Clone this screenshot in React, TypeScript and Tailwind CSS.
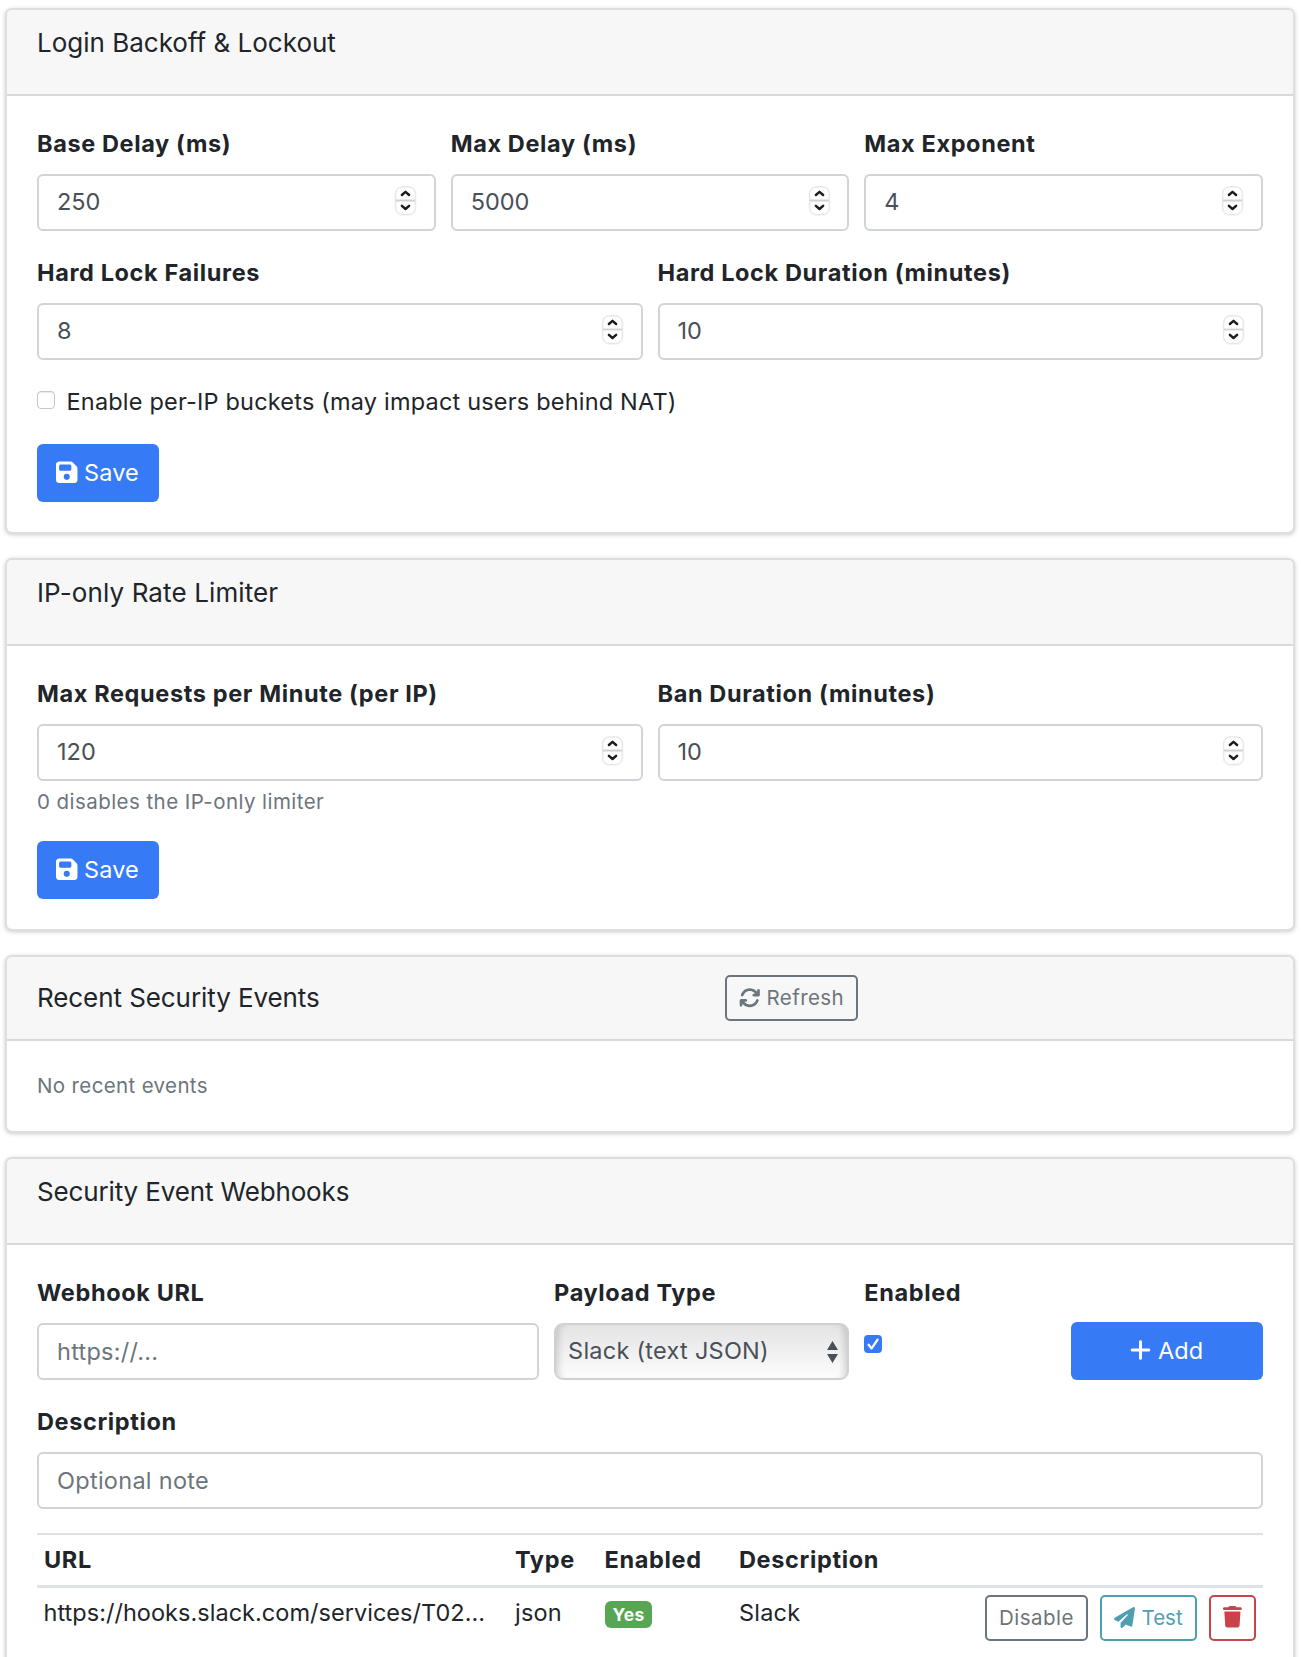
import React from "react";
import { FaFloppyDisk, FaArrowsRotate, FaPaperPlane, FaPlus, FaTrash } from "react-icons/fa6";

const control =
  "h-[57px] w-full rounded-[6px] border-2 border-[#d0d3d7] bg-white pl-[18px] text-[23.5px] leading-9 text-[#495057] placeholder:text-[#6c757d] placeholder:opacity-100 outline-none";

function Stepper() {
  return (
    <svg
      className="pointer-events-none absolute top-[11px] right-[18.5px] h-[31px] w-[23px]"
      viewBox="0 0 23 31"
      fill="none"
    >
      <rect x="1" y="1.5" width="21" height="29" rx="7" stroke="#000" strokeOpacity="0.04" />
      <rect x="1.8" y="2" width="19.4" height="27.4" rx="6.5" fill="#fff" stroke="#dedede" strokeWidth="0.9" />
      <path d="M2 15.5h19" stroke="#d2d2d2" strokeWidth="1.8" />
      <path d="M7.9 10 11.5 6.9l3.6 3.1M7.9 20.9l3.6 3.1 3.6-3.1" stroke="#1d1d1f" strokeWidth="2.5" strokeLinecap="round" strokeLinejoin="round" />
    </svg>
  );
}

function Label({ children }: { children: React.ReactNode }) {
  return (
    <div className="mb-3 h-9 text-[23.5px] leading-9 font-bold tracking-[0.62px] whitespace-nowrap">{children}</div>
  );
}

function NumberField({ label, value }: { label: string; value: string }) {
  return (
    <div>
      <Label>{label}</Label>
      <div className="relative">
        <input className={control + " pb-[2px]"} defaultValue={value} aria-label={label} />
        <Stepper />
      </div>
    </div>
  );
}

function Card({ children }: { children: React.ReactNode }) {
  return (
    <section className="overflow-hidden rounded-[7px] border-2 border-[#dedede] bg-white shadow-[0_1px_4px_rgba(0,0,0,0.2)]">
      {children}
    </section>
  );
}

function CardHeader({ children }: { children: React.ReactNode }) {
  return (
    <header className="h-[86px] border-b-2 border-[#d9d9d9] bg-[#f7f7f7] px-[30px] pt-[17px]">
      <h5 className="text-[26px] leading-[31px]">{children}</h5>
    </header>
  );
}

function SaveButton() {
  return (
    <button className="flex h-[58px] w-[122px] items-center rounded-[6px] bg-[#377af6] pl-[19px] text-[23.5px] text-white tracking-[0.1px]">
      <FaFloppyDisk className="mb-[2px] h-[24.5px] w-[21.5px]" />
      <span className="ml-[6.5px] pb-px">Save</span>
    </button>
  );
}

export default function App() {
  return (
    <div className="flex h-[1657px] flex-col gap-6 overflow-hidden bg-white pt-2 pr-[6px] pl-[5px] font-[Inter,sans-serif] text-[#212529] [&>*]:shrink-0">
      <Card>
        <CardHeader>Login Backoff &amp; Lockout</CardHeader>
        <div className="flex flex-col gap-6 p-[30px]">
          <div className="grid grid-cols-3 gap-[15px]">
            <NumberField label="Base Delay (ms)" value="250" />
            <NumberField label="Max Delay (ms)" value="5000" />
            <NumberField label="Max Exponent" value="4" />
          </div>
          <div className="grid grid-cols-2 gap-[15px]">
            <NumberField label="Hard Lock Failures" value="8" />
            <NumberField label="Hard Lock Duration (minutes)" value="10" />
          </div>
          <label className="flex h-9 items-start text-[23.5px] leading-9 tracking-[0.19px]">
            <span className="mt-[7px] size-[18px] rounded-[4px] border border-[#c6c6c6] bg-white shadow-[inset_0_1px_1px_rgba(0,0,0,0.08)]" />
            <span className="ml-[11.5px]">Enable per-IP buckets (may impact users behind NAT)</span>
          </label>
          <SaveButton />
        </div>
      </Card>

      <Card>
        <CardHeader>
          <span className="tracking-[0.12px]">IP-only Rate Limiter</span>
        </CardHeader>
        <div className="p-[30px]">
          <div className="grid grid-cols-2 gap-[15px]">
            <NumberField label="Max Requests per Minute (per IP)" value="120" />
            <NumberField label="Ban Duration (minutes)" value="10" />
          </div>
          <p className="mt-[5px] mb-6 text-[20.5px] leading-[31px] tracking-[0.44px] text-[#6c757d]">
            0 disables the IP-only limiter
          </p>
          <SaveButton />
        </div>
      </Card>

      <Card>
        <header className="flex h-[84px] items-center border-b-2 border-[#d9d9d9] bg-[#f7f7f7] pl-[30px]">
          <h5 className="w-[688px] pb-[2px] text-[26px] leading-[31px] tracking-[-0.08px]">Recent Security Events</h5>
          <button className="flex h-[46px] w-[133px] items-center rounded-[5px] border-2 border-[#6c757d] pl-[12px] text-[20.5px] tracking-[0.42px] text-[#6c757d]">
            <FaArrowsRotate className="size-[21.5px]" />
            <span className="ml-[6px]">Refresh</span>
          </button>
        </header>
        <p className="flex h-[90px] items-center px-[30px] text-[20.5px] tracking-[0.36px] text-[#6c757d]">
          No recent events
        </p>
      </Card>

      <Card>
        <CardHeader>
          <span className="tracking-[-0.14px]">Security Event Webhooks</span>
        </CardHeader>
        <div className="h-[500px] p-[30px]">
          <div className="grid grid-cols-12 gap-x-[15px] gap-y-6">
            <div className="col-span-5">
              <Label>Webhook URL</Label>
              <input className={control + " tracking-[0.25px]"} placeholder="https://..." />
            </div>
            <div className="col-span-3">
              <Label>Payload Type</Label>
              <div className="flex h-[57px] items-center justify-between rounded-[9px] border-2 border-[#d0d0d2] bg-linear-to-b from-[#e3e3e5] to-[#fdfdfd] pr-[9px] pl-[12px] text-[23.5px] tracking-[0.26px] text-[#495057] shadow-[inset_8px_0_6px_-5px_rgba(0,0,0,0.14),inset_-8px_0_6px_-5px_rgba(0,0,0,0.14)]">
                <span className="pb-px">Slack (text JSON)</span>
                <svg className="h-[22px] w-[11px]" viewBox="0 0 11 22" fill="#495057">
                  <path d="M5.5 0 11 9H0zM5.5 22 0 13h11z" />
                </svg>
              </div>
            </div>
            <div className="col-span-2">
              <Label>Enabled</Label>
              <div className="mt-6 flex size-[18px] items-center justify-center rounded-[4px] bg-[#377af6]">
                <svg className="size-[18px]" viewBox="0 0 18 18" fill="none">
                  <path d="M4.6 9.8 7.6 13.4 13.6 4.6" stroke="#fff" strokeWidth="2.3" strokeLinecap="round" strokeLinejoin="round" />
                </svg>
              </div>
            </div>
            <div className="col-span-2 pt-[47px]">
              <button className="flex h-[58px] w-full items-center justify-center rounded-[6px] bg-[#377af6] text-[23.5px] tracking-[0.1px] text-white">
                <FaPlus className="mb-[2px] h-[24px] w-[21px]" />
                <span className="mr-px ml-[7px]">Add</span>
              </button>
            </div>
            <div className="col-span-12">
              <Label>Description</Label>
              <input className={control + " tracking-[0.28px]"} placeholder="Optional note" />
            </div>
          </div>

          <table className="mt-6 w-full table-fixed border-collapse text-left text-[23.5px] leading-9 whitespace-nowrap">
            <colgroup>
              <col className="w-[471px]" />
              <col className="w-[89.5px]" />
              <col className="w-[134.5px]" />
              <col className="w-[246px]" />
              <col />
            </colgroup>
            <thead className="border-t-2 border-b-3 border-[#dee2e6]">
              <tr className="h-[52px] tracking-[0.65px]">
                <th className="pl-[7px]">URL</th>
                <th className="pl-[7px]">Type</th>
                <th className="pl-[7px]">Enabled</th>
                <th className="pl-[7px]">Description</th>
                <th />
              </tr>
            </thead>
            <tbody>
              <tr className="align-top">
                <td className="pt-[7px] pl-[6.5px] tracking-[0.03px]">https://hooks.slack.com/services/T02...</td>
                <td className="pt-[7px] pl-[7px] tracking-[0.2px]">json</td>
                <td className="pt-[13px] pl-[7.5px]">
                  <span className="flex h-[27px] w-[47px] items-center justify-center rounded-[6px] bg-[#56a653] pt-[2px] text-[17.5px] leading-none font-bold tracking-[0.3px] text-white">
                    Yes
                  </span>
                </td>
                <td className="pt-[7px] pl-[7px] tracking-[0.2px]">Slack</td>
                <td className="pt-[7px]">
                  <div className="mr-[7px] flex justify-end gap-3 text-[20.5px] tracking-[0.46px]">
                    <button className="flex h-[46px] w-[103px] items-center justify-center rounded-[5px] border-2 border-[#6c757d] text-[#6c757d]">
                      Disable
                    </button>
                    <button className="flex h-[46px] w-[97px] items-center rounded-[5px] border-2 border-[#4f9fb3] pl-[11.5px] text-[#4f9fb3]">
                      <FaPaperPlane className="size-[21px]" />
                      <span className="ml-[7px] tracking-normal">Test</span>
                    </button>
                    <button className="flex h-[46px] w-[47px] items-center justify-center rounded-[5px] border-2 border-[#c8434a] text-[#c8434a]" aria-label="Delete">
                      <FaTrash className="mb-px h-[21.5px] w-[18.8px]" />
                    </button>
                  </div>
                </td>
              </tr>
            </tbody>
          </table>
        </div>
      </Card>
    </div>
  );
}
